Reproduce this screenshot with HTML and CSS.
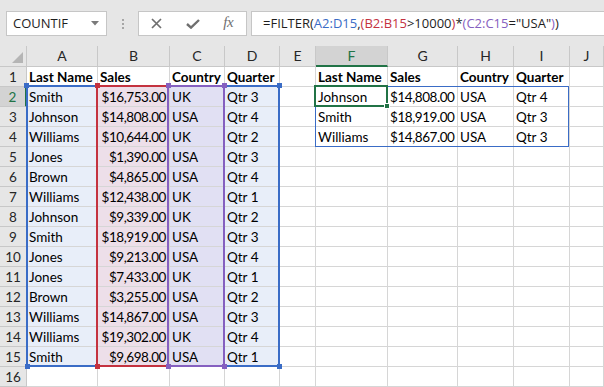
FILE: index.html
```html
<!DOCTYPE html>
<html>
<head>
<meta charset="utf-8">
<link rel="stylesheet" href="styles.css">
</head>
<body>
<div class="app">
  <div class="toolbar">
    <div class="namebox">
      <span class="nb-text">COUNTIF</span>
      <svg class="caret" width="8" height="5" viewBox="0 0 8 5"><path d="M0 0 H8 L4 4.5 Z" fill="#7a7a7a"/></svg>
    </div>
    <div class="grip"><i></i><i></i><i></i></div>
    <div class="fbtns">
      <span class="fslot"><svg width="11" height="11" viewBox="0 0 11 11"><path d="M1 1 L10 10 M10 1 L1 10" stroke="#6f6f6f" stroke-width="1.7" fill="none"/></svg></span>
      <span class="fslot"><svg width="14" height="10" viewBox="0 0 14 10"><path d="M1 5 L5 8.6 L13 1" stroke="#6f6f6f" stroke-width="2.4" fill="none"/></svg></span>
      <span class="fslot fx">fx</span>
    </div>
    <div class="finput"><span>=FILTER(</span><span class="kb">A2:D15</span><span>,</span><span class="kr">(B2:B15</span><span>&gt;10000</span><span class="kr">)</span><span>*</span><span class="kp">(C2:C15</span><span>="USA"</span><span class="kp">)</span><span>)</span></div>
  </div>

  <div class="grid">
    <div class="h corner"><svg width="11" height="11" viewBox="0 0 11 11"><path d="M11 0 V11 H0 Z" fill="#b5b5b5"/></svg></div>
    <div class="h">A</div><div class="h">B</div><div class="h">C</div><div class="h">D</div><div class="h">E</div><div class="h sel">F</div><div class="h">G</div><div class="h">H</div><div class="h">I</div><div class="h">J</div>

    <div class="r">1</div><div class="c b">Last Name</div><div class="c b">Sales</div><div class="c b">Country</div><div class="c b">Quarter</div><div class="c"></div><div class="c b">Last Name</div><div class="c b">Sales</div><div class="c b">Country</div><div class="c b">Quarter</div><div class="c"></div>

    <div class="r rsel">2</div><div class="c ta">Smith</div><div class="c tb n">$16,753.00</div><div class="c tc">UK</div><div class="c ta">Qtr 3</div><div class="c"></div><div class="c">Johnson</div><div class="c n">$14,808.00</div><div class="c">USA</div><div class="c">Qtr 4</div><div class="c"></div>

    <div class="r">3</div><div class="c ta">Johnson</div><div class="c tb n">$14,808.00</div><div class="c tc">USA</div><div class="c ta">Qtr 4</div><div class="c"></div><div class="c">Smith</div><div class="c n">$18,919.00</div><div class="c">USA</div><div class="c">Qtr 3</div><div class="c"></div>

    <div class="r">4</div><div class="c ta">Williams</div><div class="c tb n">$10,644.00</div><div class="c tc">UK</div><div class="c ta">Qtr 2</div><div class="c"></div><div class="c">Williams</div><div class="c n">$14,867.00</div><div class="c">USA</div><div class="c">Qtr 3</div><div class="c"></div>

    <div class="r">5</div><div class="c ta">Jones</div><div class="c tb n">$1,390.00</div><div class="c tc">USA</div><div class="c ta">Qtr 3</div><div class="c"></div><div class="c"></div><div class="c"></div><div class="c"></div><div class="c"></div><div class="c"></div>

    <div class="r">6</div><div class="c ta">Brown</div><div class="c tb n">$4,865.00</div><div class="c tc">USA</div><div class="c ta">Qtr 4</div><div class="c"></div><div class="c"></div><div class="c"></div><div class="c"></div><div class="c"></div><div class="c"></div>

    <div class="r">7</div><div class="c ta">Williams</div><div class="c tb n">$12,438.00</div><div class="c tc">UK</div><div class="c ta">Qtr 1</div><div class="c"></div><div class="c"></div><div class="c"></div><div class="c"></div><div class="c"></div><div class="c"></div>

    <div class="r">8</div><div class="c ta">Johnson</div><div class="c tb n">$9,339.00</div><div class="c tc">UK</div><div class="c ta">Qtr 2</div><div class="c"></div><div class="c"></div><div class="c"></div><div class="c"></div><div class="c"></div><div class="c"></div>

    <div class="r">9</div><div class="c ta">Smith</div><div class="c tb n">$18,919.00</div><div class="c tc">USA</div><div class="c ta">Qtr 3</div><div class="c"></div><div class="c"></div><div class="c"></div><div class="c"></div><div class="c"></div><div class="c"></div>

    <div class="r">10</div><div class="c ta">Jones</div><div class="c tb n">$9,213.00</div><div class="c tc">USA</div><div class="c ta">Qtr 4</div><div class="c"></div><div class="c"></div><div class="c"></div><div class="c"></div><div class="c"></div><div class="c"></div>

    <div class="r">11</div><div class="c ta">Jones</div><div class="c tb n">$7,433.00</div><div class="c tc">UK</div><div class="c ta">Qtr 1</div><div class="c"></div><div class="c"></div><div class="c"></div><div class="c"></div><div class="c"></div><div class="c"></div>

    <div class="r">12</div><div class="c ta">Brown</div><div class="c tb n">$3,255.00</div><div class="c tc">USA</div><div class="c ta">Qtr 2</div><div class="c"></div><div class="c"></div><div class="c"></div><div class="c"></div><div class="c"></div><div class="c"></div>

    <div class="r">13</div><div class="c ta">Williams</div><div class="c tb n">$14,867.00</div><div class="c tc">USA</div><div class="c ta">Qtr 3</div><div class="c"></div><div class="c"></div><div class="c"></div><div class="c"></div><div class="c"></div><div class="c"></div>

    <div class="r">14</div><div class="c ta">Williams</div><div class="c tb n">$19,302.00</div><div class="c tc">UK</div><div class="c ta">Qtr 4</div><div class="c"></div><div class="c"></div><div class="c"></div><div class="c"></div><div class="c"></div><div class="c"></div>

    <div class="r">15</div><div class="c ta">Smith</div><div class="c tb n">$9,698.00</div><div class="c tc">USA</div><div class="c ta">Qtr 1</div><div class="c"></div><div class="c"></div><div class="c"></div><div class="c"></div><div class="c"></div><div class="c"></div>

    <div class="r">16</div><div class="c"></div><div class="c"></div><div class="c"></div><div class="c"></div><div class="c"></div><div class="c"></div><div class="c"></div><div class="c"></div><div class="c"></div><div class="c"></div>

    <!-- range highlight overlays -->
    <div class="rng rng-all"></div>
    <div class="rng rng-b"></div>
    <div class="rng rng-c"></div>
    <div class="sq blue sq-tl-a"></div>
    <div class="sq blue sq-tr-a"></div>
    <div class="sq blue sq-bl-a"></div>
    <div class="sq blue sq-br-a"></div>
    <div class="sq red sq-t-b"></div>
    <div class="sq red sq-b-b"></div>
    <div class="sq purple sq-tl-c"></div>
    <div class="sq purple sq-tr-c"></div>
    <div class="sq purple sq-bl-c"></div>
    <div class="sq purple sq-br-c"></div>
    <div class="spill"></div>
    <div class="active"></div>
    <div class="handle"></div>
  </div>
</div>
</body>
</html>
```
FILE: styles.css
```css
* { box-sizing: border-box; }
html, body { margin: 0; padding: 0; background: #ffffff; }
.app { width: 604px; height: 387px; overflow: hidden; background: #ffffff; }

.toolbar {
  height: 46px;
  background: #e6e6e6;
  display: flex;
  align-items: flex-start;
  padding: 11px 0 0 6px;
  font-family: "Open Sans", "Noto Sans", sans-serif;
}
.namebox {
  width: 101px;
  height: 25px;
  background: #fff;
  border: 1px solid #c6c6c6;
  display: flex;
  align-items: center;
  justify-content: space-between;
  padding: 0 7px 1px 6px;
  font-size: 13px;
  color: #1e1e1e;
}
.caret { margin-top: 1px; }
.grip {
  width: 31px;
  height: 25px;
  display: flex;
  flex-direction: column;
  align-items: center;
  justify-content: center;
  gap: 2px;
}
.grip i { display: block; width: 2px; height: 2px; background: #a6a6a6; }
.fbtns {
  width: 109px;
  height: 25px;
  background: #fff;
  border: 1px solid #c6c6c6;
  display: flex;
  align-items: center;
  padding-left: 0;
}
.fslot { width: 36px; display: flex; justify-content: center; align-items: center; }
.fx {
  font-family: "Liberation Serif", "DejaVu Serif", serif;
  font-style: italic;
  font-size: 15px;
  color: #6f6f6f;
  letter-spacing: -0.5px;
  padding-bottom: 2px;
}
.finput {
  flex: 1;
  height: 25px;
  margin-left: 4px;
  background: #fff;
  border: 1px solid #c6c6c6;
  border-right: none;
  padding: 0 0 1px 11px;
  display: flex;
  align-items: center;
  font-size: 13px;
  color: #1e1e1e;
  white-space: pre;
}
.kb { color: #3a6cc6; }
.kr { color: #c4323f; }
.kp { color: #8560c0; }

.grid {
  position: relative;
  display: grid;
  grid-template-columns: 27px 71px 72px 55px 55px 36px 72px 70px 56px 56px 1fr;
  grid-template-rows: 21px repeat(16, 20px);
  font-family: Lato, "Open Sans", sans-serif;
  font-size: 13.5px;
  color: #000;
}
.c {
  border-right: 1px solid #d6d6d6;
  border-bottom: 1px solid #d6d6d6;
  padding: 1px 2px 0 2px;
  line-height: 18px;
  white-space: nowrap;
  overflow: hidden;
}
.b { font-weight: bold; }
.n { text-align: right; padding-right: 3px; letter-spacing: -0.45px; }
.ta { background: #e8eef9; }
.tb { background: #eddfe9; }
.tc { background: #e1e0f3; }

.h, .r {
  background: #e6e6e6;
  border-right: 1px solid #c8c8c8;
  border-bottom: 1px solid #c8c8c8;
  text-align: center;
  color: #262626;
  font-size: 14px;
  line-height: 19px;
}
.r { font-size: 13.5px; line-height: 19px; padding-top: 1px; }
.h.sel {
  background: #d3d3d3;
  color: #217346;
  border-bottom: 2px solid #217346;
}
.r.rsel {
  background: #d3d3d3;
  color: #217346;
  border-right: 2px solid #217346;
}
.corner { display: flex; align-items: flex-end; justify-content: flex-end; padding: 0 3px 3px 0; }

.rng { position: absolute; border: 2px solid; top: 39px; height: 282px; }
.rng-all { left: 26px; width: 254px; border-color: #3a6cc6; }
.rng-b { left: 96px; width: 73px; border-color: #c4323f; }
.rng-c { left: 167px; width: 58px; border-color: #8560c0; }

.sq { position: absolute; width: 5px; height: 5px; }
.blue { background: #3a6cc6; }
.red { background: #c4323f; }
.purple { background: #8560c0; }
.sq-tl-a { left: 24px; top: 37px; }
.sq-tr-a { left: 277px; top: 37px; }
.sq-bl-a { left: 25px; top: 318px; }
.sq-br-a { left: 277px; top: 318px; }
.sq-t-b { left: 95px; top: 37px; }
.sq-b-b { left: 95px; top: 318px; }
.sq-tl-c { left: 166px; top: 37px; }
.sq-tr-c { left: 222px; top: 37px; }
.sq-bl-c { left: 166px; top: 318px; }
.sq-br-c { left: 222px; top: 318px; }

.spill {
  position: absolute;
  left: 315px; top: 40px;
  width: 254px; height: 61px;
  border: 1px solid #3a6cc6;
}
.active {
  position: absolute;
  left: 314px; top: 39px;
  width: 74px; height: 22px;
  border: 2px solid #217346;
}
.handle {
  position: absolute;
  left: 384px; top: 57px;
  width: 6px; height: 6px;
  background: #217346;
  border: 1px solid #fff;
}
```
